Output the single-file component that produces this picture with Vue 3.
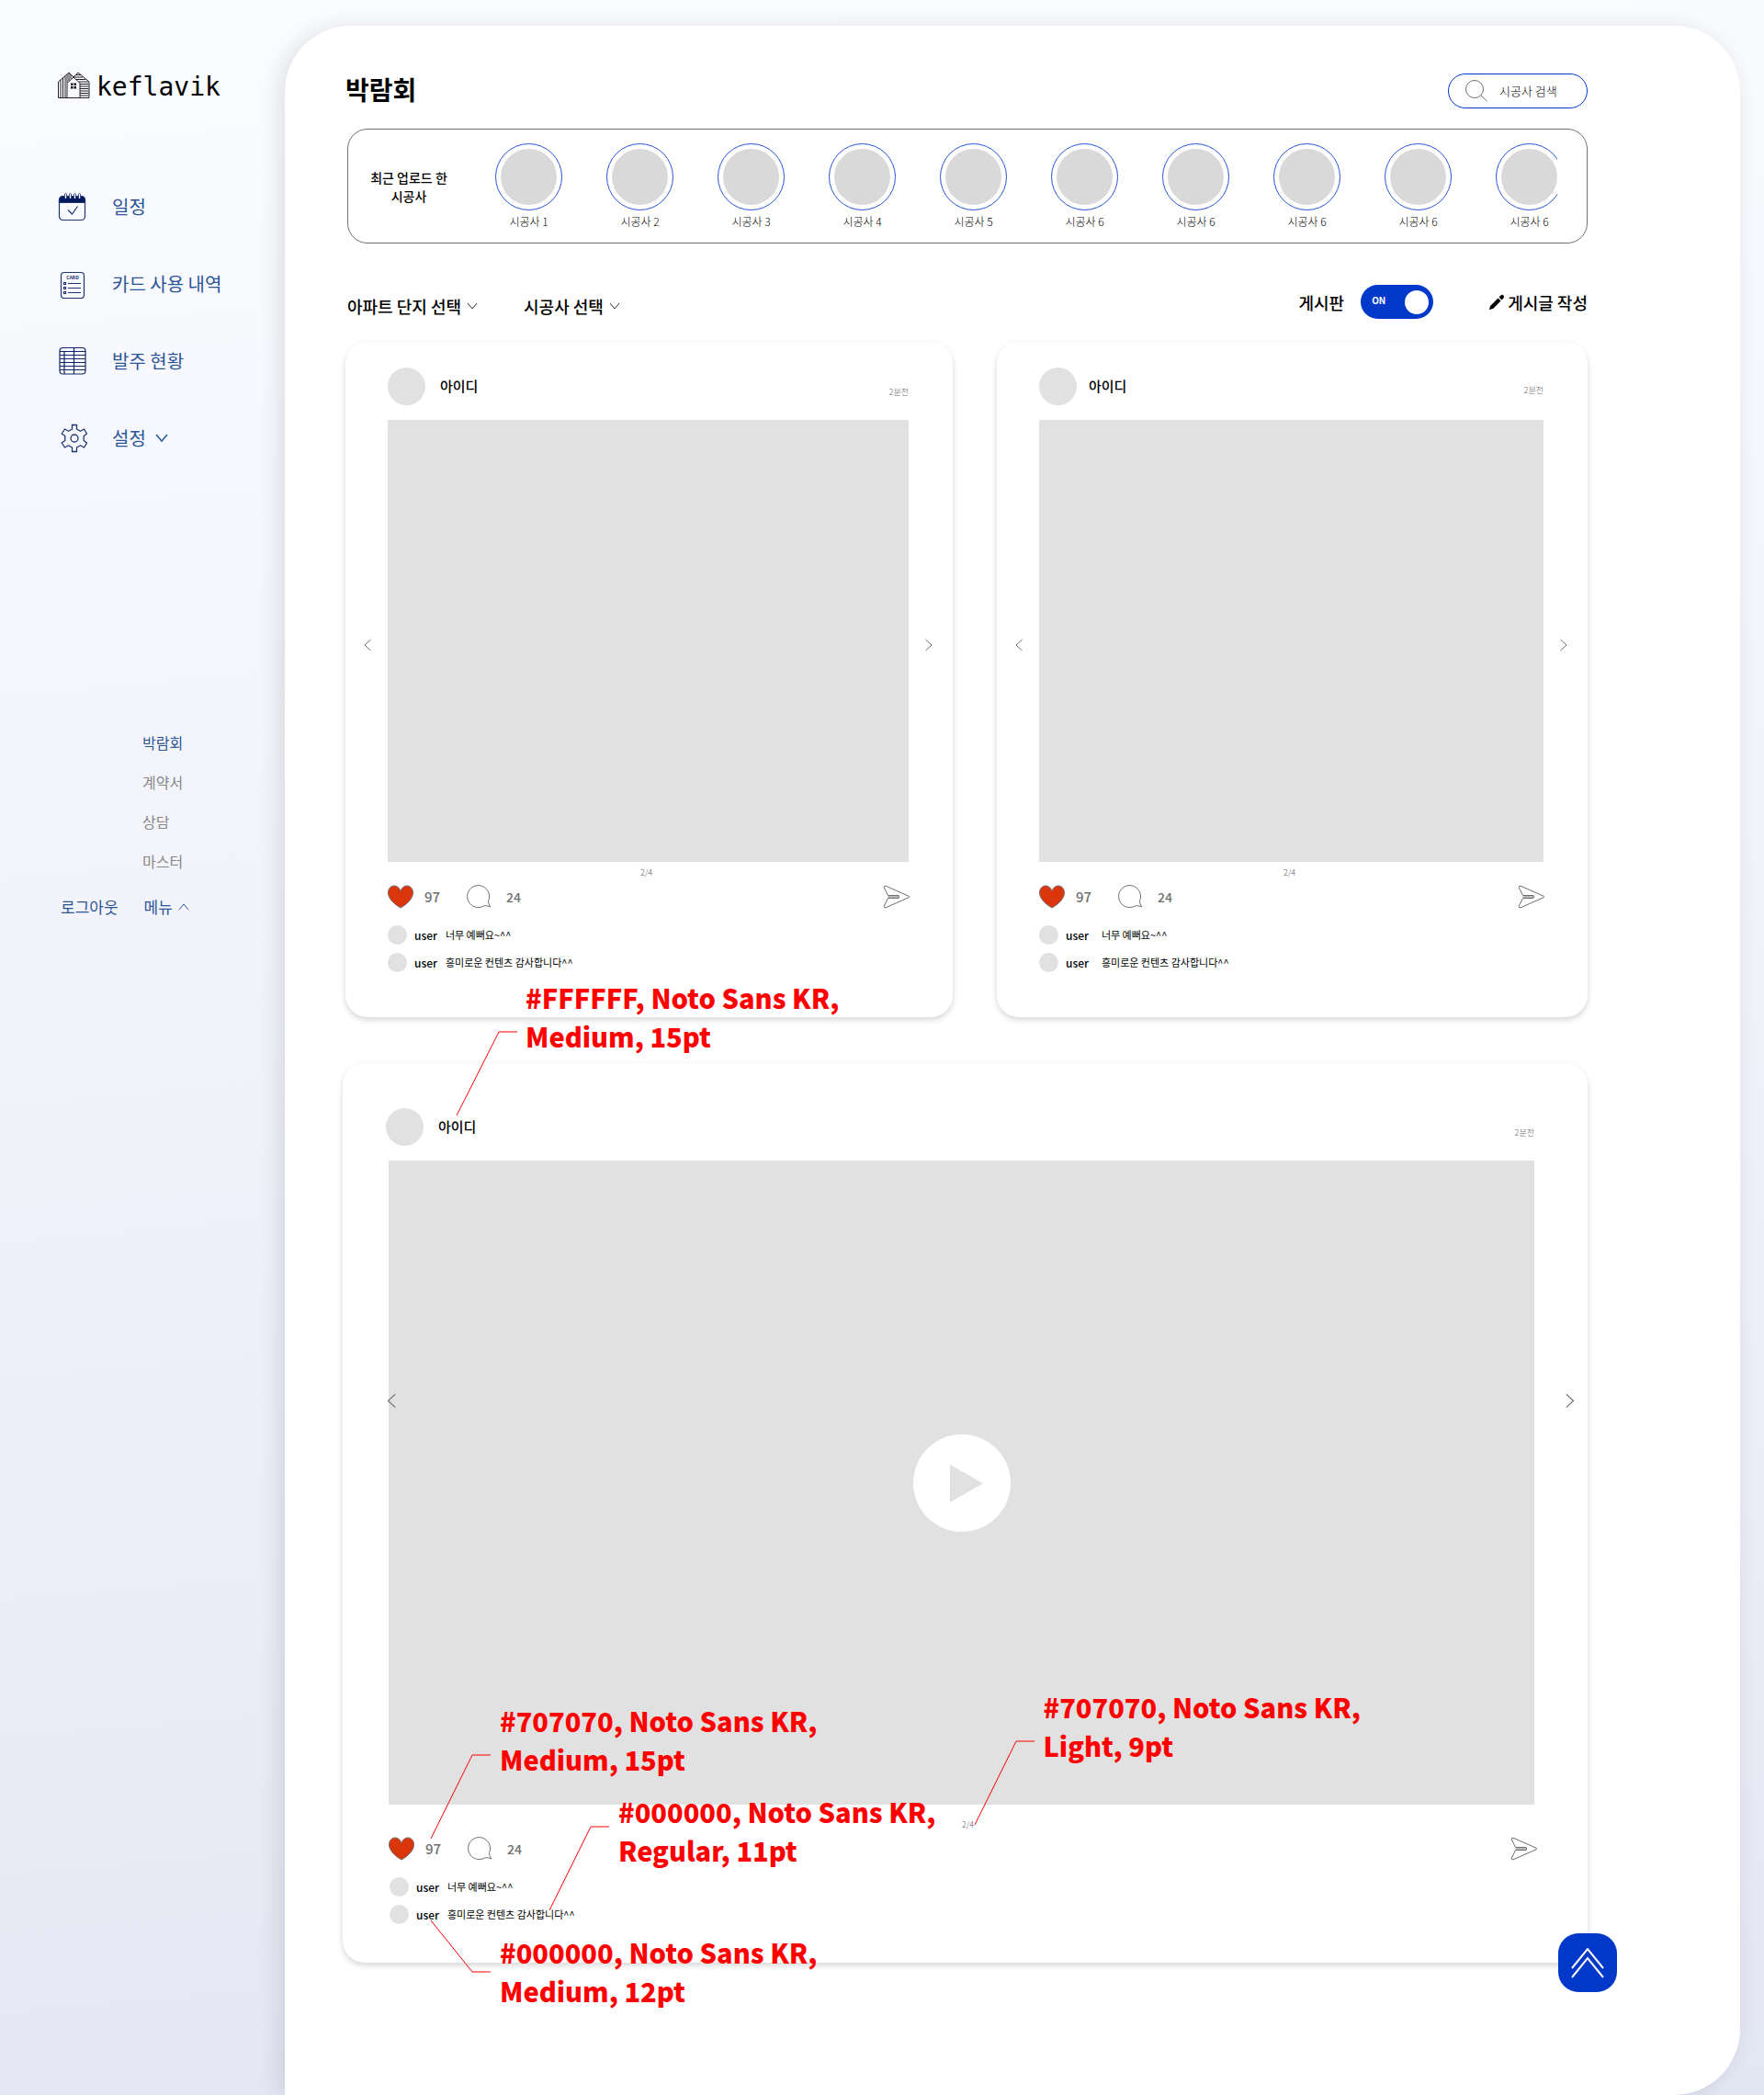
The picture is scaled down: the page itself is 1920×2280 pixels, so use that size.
<script setup>
import { ref } from 'vue'

const boardOn = ref(true)

const makers = [1, 2, 3, 4, 5, 6, 6, 6, 6, 6]

const subMenu = [
  { label: '박람회', active: true },
  { label: '계약서' },
  { label: '상담' },
  { label: '마스터' },
]

const posts = [
  { kind: 'left' },
  { kind: 'right' },
  { kind: 'wide', video: true },
]

const comments = ['너무 예뻐요~^^', '흥미로운 컨텐츠 감사합니다^^']
</script>

<template>
  <div class="page">
    <aside class="sidebar">
      <a class="logo" href="#">
        <svg width="36" height="30" viewBox="0 0 36 30" fill="none" stroke="#222" stroke-width="1">
          <path d="M1.500 28.500V11L13 1l5 5 5-5 12 10v17.500z" />
          <path d="M11 28V12.500L18 6l7 6.500V28" />
          <path d="M4 28V9M6.500 28V7M9 28V5M11 12V3M13 10V1.500M15 8V3" />
          <path d="M25 26h9.500M25 23.500h9.500M25 21h9.500M25 18.500h9.500M25 16h9.500M25 13.500h9.500M24 11h10M21 8.500h10M19 6h9M21 3.500h5" />
          <path d="M15 12.500h2.500v2.500H15zM18.500 12.500H21v2.500h-2.500zM15 16h2.500v2.500H15zM18.500 16H21v2.500h-2.500z" fill="#000" stroke="none" />
        </svg>
        <span>keflavik</span>
      </a>

      <nav class="nav">
        <a href="#">
          <svg width="32" height="32" viewBox="0 0 32 32" fill="none" stroke="#1d3575" stroke-width="1.200">
            <rect x="1.500" y="5" width="28" height="25.500" rx="4" />
            <path d="M1.500 11.500V8.500a4 4 0 0 1 4-4h20a4 4 0 0 1 4 4v3z" fill="#021a5c" />
            <path d="M8.500 7V2M13.500 7V2M18.500 7V2M23.500 7V2" stroke="#fafbff" stroke-width="2.500" />
            <path d="M7.500 7V2q1-1.500 2 0v5M12.500 7V2q1-1.500 2 0v5M17.500 7V2q1-1.500 2 0v5M22.500 7V2q1-1.500 2 0v5" stroke-width=".8" />
            <path d="M11 19.500l4.500 4.500 6-8.500" />
          </svg>
          <span>일정</span>
        </a>
        <a href="#">
          <svg width="32" height="32" viewBox="0 0 32 32" fill="none" stroke="#1d3575" stroke-width="1.200">
            <rect x="3.500" y="3.500" width="25" height="28" rx="3.500" />
            <text x="16" y="11" text-anchor="middle" class="card-word">CARD</text>
            <path d="M11 15.500h14M11 20.500h14M11 25.500h14" />
            <path d="M6.500 14.500h2v2h-2zM6.500 19.500h2v2h-2zM6.500 24.500h2v2h-2z" />
          </svg>
          <span>카드 사용 내역</span>
        </a>
        <a href="#">
          <svg width="32" height="32" viewBox="0 0 32 32" fill="none" stroke="#0f2669" stroke-width="1.200">
            <rect x="2" y="1.500" width="28" height="28.500" rx="3.500" />
            <path d="M2 5.500h28M2 9.500h28M2 13.500h28M2 17.500h28M2 21.500h28M2 25.500h28M7 5.500V30M17.500 1.500V30" />
          </svg>
          <span>발주 현황</span>
        </a>
        <a href="#">
          <svg width="32" height="32" viewBox="-1 0 32 32" fill="none" stroke="#1d3575" stroke-width="1.300" stroke-linejoin="round">
            <path d="M14.500 1.500h5v4.500l4 2.200 4-2.200 3 5-3.300 2.500v5l3.300 2.500-3 5-4-2.200-4 2.200v4.500h-5V26l-4-2.200-4 2.200-3.300-5 3.600-2.500v-5L3.200 11l3.300-5 4 2.200 4-2.200z" />
            <circle cx="17" cy="16" r="4" />
          </svg>
          <span>설정</span>
          <svg class="caret" width="14" height="10" viewBox="0 0 14 10" fill="none" stroke="#2b5597" stroke-width="1.500"><path d="M1 1l6 7 6-7" /></svg>
        </a>
      </nav>

      <nav class="submenu">
        <a v-for="m in subMenu" :key="m.label" href="#" :class="{ active: m.active }">{{ m.label }}</a>
      </nav>
      <div class="account">
        <a href="#">로그아웃</a>
        <a href="#">메뉴
          <svg width="12" height="8" viewBox="0 0 12 8" fill="none" stroke="#2b5597"><path d="M1 7l5-6 5 6" /></svg>
        </a>
      </div>
    </aside>

    <main class="panel">
      <header class="top">
        <h1>박람회</h1>
        <label class="search">
          <svg width="26" height="26" viewBox="0 0 26 26" fill="none" stroke="#707070"><circle cx="11" cy="11" r="9.500" /><path d="M18 18l6.500 6" /></svg>
          <input type="search" placeholder="시공사 검색" aria-label="시공사 검색">
        </label>
      </header>

      <section class="recent">
        <h2>최근 업로드 한<br>시공사</h2>
        <ul>
          <li v-for="(n, i) in makers" :key="i">
            <span class="ring"><i></i></span>
            <a href="#">시공사 {{ n }}</a>
          </li>
        </ul>
      </section>

      <section class="tools">
        <div class="filters">
          <button type="button">아파트 단지 선택
            <svg width="12" height="8" viewBox="0 0 12 8" fill="none" stroke="#333"><path d="M1 1l5 6 5-6" /></svg>
          </button>
          <button type="button">시공사 선택
            <svg width="12" height="8" viewBox="0 0 12 8" fill="none" stroke="#333"><path d="M1 1l5 6 5-6" /></svg>
          </button>
        </div>
        <div class="actions">
          <label class="switch">
            <span>게시판</span>
            <input v-model="boardOn" type="checkbox">
            <span class="track"><b>ON</b><i></i></span>
          </label>
          <button type="button">
            <svg width="18" height="18" viewBox="0 0 18 18"><path d="M1 17l1-4L10.500 4.500l3 3L5 16zM11.500 3.500l2-2q2-1.500 3 0t0 3l-2 2z" /></svg>
            게시글 작성
          </button>
        </div>
      </section>

      <section class="feed">
        <article v-for="p in posts" :key="p.kind" class="card" :class="p.kind">
          <header>
            <span class="avatar"></span>
            <strong>아이디</strong>
            <time>2분전</time>
          </header>
          <div class="media">
            <button v-if="p.video" class="play" type="button" aria-label="재생">
              <svg width="106" height="106" viewBox="0 0 106 106"><circle cx="53" cy="53" r="53" fill="#fff" /><path d="M40 33v41l36-20.500z" fill="#e1e1e1" /></svg>
            </button>
          </div>
          <button class="arrow prev" type="button" aria-label="이전">
            <svg width="10" height="16" viewBox="0 0 10 16" fill="none" stroke="#707070"><path d="M8.500 2L2 8l6.500 6" /></svg>
          </button>
          <button class="arrow next" type="button" aria-label="다음">
            <svg width="10" height="16" viewBox="0 0 10 16" fill="none" stroke="#707070"><path d="M1.500 2L8 8l-6.500 6" /></svg>
          </button>
          <p class="pager">2/4</p>
          <div class="stats">
            <button type="button" class="like">
              <svg width="28" height="26" viewBox="0 0 28 26"><path d="M14 25C7 21 .5 15 .5 8.500.5 4 3.500 1 7 1c3.500 0 6 2.500 7 6 1-3.500 3.500-6 7-6 3.500 0 6.500 3 6.500 7.500C27.500 15 21 21 14 25z" fill="#da350b" stroke="#707070" /></svg>
              97
            </button>
            <button type="button" class="reply">
              <svg width="28" height="26" viewBox="0 0 28 26" fill="none" stroke="#707070"><path d="M24.500 17.500a12 12 0 1 0-5 5.500c2-.8 4.500 0 7.500.8-1.800-2-2.500-4-2.500-6.300z" /></svg>
              24
            </button>
            <button type="button" class="send" aria-label="공유">
              <svg width="30" height="26" viewBox="0 0 30 26" fill="none" stroke="#707070" stroke-linejoin="round"><path d="M3 1.200l25 11q1.500.8 0 1.600l-25 11q-2 .5-1.800-1.500L5.500 14.500H17q1.500-1.500 0-3H5.500L1.200 2.700Q1 .7 3 1.200zM5.500 13H17" /></svg>
            </button>
          </div>
          <ul class="comments">
            <li v-for="c in comments" :key="c"><i></i><b>user</b><span>{{ c }}</span></li>
          </ul>

          <template v-if="p.video">
            <div class="note n-id">
              <svg width="68" height="93" viewBox="0 0 68 93"><path d="M1 92L47 1h20" /></svg>
              <p>#FFFFFF, Noto Sans KR,<br>Medium, 15pt</p>
            </div>
            <div class="note n-like">
              <svg width="68" height="93" viewBox="0 0 68 93"><path d="M1 92L46 1h20" /></svg>
              <p>#707070, Noto Sans KR,<br>Medium, 15pt</p>
            </div>
            <div class="note n-text">
              <svg width="68" height="93" viewBox="0 0 68 93"><path d="M1 92L46 1h20" /></svg>
              <p>#000000, Noto Sans KR,<br>Regular, 11pt</p>
            </div>
            <div class="note n-user">
              <svg width="68" height="59" viewBox="0 0 68 59"><path d="M1 1l45 56h20" /></svg>
              <p>#000000, Noto Sans KR,<br>Medium, 12pt</p>
            </div>
            <div class="note n-page">
              <svg width="68" height="93" viewBox="0 0 68 93"><path d="M1 92L46 1h20" /></svg>
              <p>#707070, Noto Sans KR,<br>Light, 9pt</p>
            </div>
          </template>
        </article>
        <button class="to-top" type="button" aria-label="맨 위로">
          <svg width="38" height="36" viewBox="0 0 38 36" fill="none" stroke="#fff" stroke-width="2"><path d="M2 24L19 3l17 21M2 34l17-21 17 21" /></svg>
        </button>
      </section>
    </main>
  </div>
</template>

<style>
body {
  margin: 0;
}
</style>

<style scoped>
* {
  box-sizing: border-box;
}
.page {
  display: flex;
  min-height: 100vh;
  padding: 28px 26px 0 0;
  background: linear-gradient(175deg, #fbfcff 0%, #f3f4fb 40%, #e3e6f3 100%);
  font-family: "Noto Sans CJK KR", "Noto Sans KR", sans-serif;
  color: #000;
  overflow: hidden;
}
a {
  color: inherit;
  text-decoration: none;
}
button {
  padding: 0;
  border: 0;
  background: none;
  font: inherit;
  color: inherit;
}
svg {
  display: block;
  flex: none;
}
h1, h2, p, ul {
  margin: 0;
  padding: 0;
  list-style: none;
}

/* sidebar */
.sidebar {
  flex: none;
  width: 310px;
  padding: 48px 0 0 62px;
  color: #2b5597;
}
.logo {
  display: flex;
  align-items: flex-start;
  gap: 7px;
  height: 36px;
  color: #000;
  font: 28px/38px "DejaVu Sans Mono", monospace;
}
.logo svg {
  margin-top: 2px;
}
.nav {
  display: flex;
  flex-direction: column;
  gap: 52px;
  margin: 97px 0 0 1px;
}
.nav a {
  display: flex;
  align-items: center;
  height: 32px;
  font-size: 20px;
  line-height: 32px;
}
.nav span {
  margin-left: 27px;
}
.nav .caret {
  margin-left: 10px;
}
.card-word {
  font: 700 5px "Noto Sans", sans-serif;
  fill: #1d3575;
  stroke: none;
}
.submenu {
  display: flex;
  flex-direction: column;
  gap: 19px;
  margin: 303px 0 0 93px;
  color: #888;
  font-size: 16px;
  line-height: 24px;
}
.submenu .active {
  color: #2b5597;
}
.account {
  display: flex;
  gap: 28px;
  margin: 26px 0 0 4px;
  font-size: 17px;
  line-height: 24px;
}
.account a {
  display: flex;
  align-items: center;
  gap: 6px;
}

/* panel */
.panel {
  flex: 1;
  min-width: 0;
  padding: 52px 166px 144px 66px;
  border-radius: 72px 72px 72px 0;
  background: #fff;
  box-shadow: -6px 2px 24px rgba(0, 0, 0, 0.11);
}
.top {
  display: flex;
  align-items: flex-start;
  justify-content: space-between;
  height: 38px;
}
h1 {
  font-size: 28px;
  line-height: 34px;
  font-weight: 700;
}
.search {
  display: flex;
  align-items: center;
  gap: 12px;
  width: 152px;
  height: 38px;
  padding-left: 17px;
  border: 1px solid #0038c9;
  border-radius: 19px;
}
.search input {
  width: 90px;
  padding: 0;
  border: 0;
  outline: 0;
  background: none;
  font: 300 13px/20px "Noto Sans CJK KR", sans-serif;
}
.search input::placeholder {
  color: #000;
}
.recent {
  display: flex;
  height: 125px;
  margin: 22px 0 0 2px;
  padding: 15px 32px 0 0;
  border: 1px solid #707070;
  border-radius: 22px;
}
.recent h2 {
  flex: none;
  width: 160px;
  padding: 27px 28px 0 0;
  font-size: 14px;
  line-height: 20px;
  font-weight: 500;
  text-align: center;
}
.recent ul {
  display: flex;
  flex: 1;
  gap: 48px;
  overflow: hidden;
}
.recent li {
  flex: none;
  width: 73px;
  text-align: center;
  font-size: 12px;
  line-height: 18px;
  font-weight: 300;
}
.ring {
  display: block;
  width: 73px;
  height: 73px;
  margin-bottom: 3px;
  padding: 5px;
  border: 1px solid #2455d8;
  border-radius: 50%;
}
.ring i {
  display: block;
  height: 61px;
  border-radius: 50%;
  background: #d9d9d9;
}
.tools {
  display: flex;
  justify-content: space-between;
  align-items: flex-start;
  height: 62px;
  margin: 45px 0 0 2px;
  font-size: 18px;
  line-height: 26px;
  font-weight: 500;
}
.filters {
  display: flex;
  gap: 50px;
  padding-top: 10px;
}
.tools button {
  display: flex;
  align-items: center;
  gap: 6px;
}
.actions {
  display: flex;
  align-items: center;
  gap: 60px;
}
.actions button {
  gap: 3px;
}
.switch {
  display: flex;
  align-items: center;
  gap: 18px;
}
.switch input {
  position: absolute;
  opacity: 0;
}
.track {
  display: flex;
  align-items: center;
  justify-content: space-between;
  width: 79px;
  height: 37px;
  padding: 0 5px 0 12px;
  border-radius: 19px;
  background: #0038c9;
  color: #fff;
}
.track b {
  padding-bottom: 3px;
  font-size: 10px;
  line-height: 16px;
  font-weight: 700;
}
.track i {
  width: 26px;
  height: 26px;
  border-radius: 50%;
  background: #fff;
}

/* feed */
.feed {
  position: relative;
  display: grid;
  grid-template-columns: 661fr 643fr;
  column-gap: 48px;
  row-gap: 50px;
}
.card {
  position: relative;
  height: 735px;
  padding: 28px 48px 0 46px;
  border-radius: 24px;
  background: #fff;
  box-shadow: 0 3px 6px rgba(0, 0, 0, 0.16);
}
.card.wide {
  grid-column: 1 / 3;
  height: 979px;
  margin-left: -3px;
  padding: 49px 58px 0 50px;
}
.card > header {
  display: flex;
  align-items: center;
  height: 41px;
  margin-bottom: 16px;
}
.wide > header {
  margin-left: -3px;
}
.avatar {
  width: 41px;
  height: 41px;
  margin-right: 16px;
  border-radius: 50%;
  background: #e1e1e1;
}
.right .avatar {
  margin-right: 13px;
}
.card strong {
  padding-bottom: 2px;
  font-size: 15px;
  line-height: 22px;
  font-weight: 500;
}
.card time {
  margin: 12px 0 0 auto;
  color: #707070;
  font-size: 9px;
  line-height: 14px;
  font-weight: 300;
}
.right time {
  margin-top: 8px;
}
.media {
  display: flex;
  align-items: center;
  justify-content: center;
  height: 481px;
  background: #e1e1e1;
}
.wide .media {
  height: 701px;
}
.arrow {
  position: absolute;
  top: 322px;
}
.prev {
  left: 19px;
}
.next {
  right: 21px;
}
.wide .arrow {
  top: 358px;
}
.wide .arrow svg {
  width: 12px;
  height: 19px;
}
.wide .prev {
  left: 47px;
}
.wide .next {
  right: 13px;
}
.pager {
  padding: 5px 4px 0 0;
  color: #606060;
  font-size: 9px;
  line-height: 14px;
  font-weight: 300;
  text-align: center;
}
.wide .pager {
  padding: 15px 0 0 14px;
}
.stats {
  display: flex;
  align-items: center;
  gap: 28px;
  height: 26px;
  margin-top: 6px;
  color: #707070;
  font-weight: 500;
}
.stats button {
  display: flex;
  align-items: center;
  gap: 12px;
  font-size: 15px;
  line-height: 22px;
}
.stats .reply {
  gap: 16px;
  font-size: 14px;
}
.stats .send {
  margin: 0 -2px 0 auto;
}
.wide .send {
  margin-right: -4px;
}
.comments {
  display: flex;
  flex-direction: column;
  gap: 9px;
  margin-top: 18px;
  font-size: 11px;
  line-height: 21px;
}
.wide .comments {
  margin-left: 1px;
}
.comments li {
  display: flex;
  align-items: center;
}
.comments i {
  width: 21px;
  height: 21px;
  margin-right: 8px;
  border-radius: 50%;
  background: #e1e1e1;
}
.comments b {
  margin-right: 9px;
  font-size: 12px;
  font-weight: 500;
}
.right .comments b {
  margin-right: 14px;
}

/* spec notes laid over the cards */
.note {
  position: absolute;
  display: flex;
  align-items: flex-start;
  gap: 8px;
  color: #f00;
  font-size: 29px;
  line-height: 42px;
  font-weight: 900;
  white-space: nowrap;
}
.note svg {
  margin-top: 58px;
  fill: none;
  stroke: #f00;
}
.n-id {
  top: -93px;
  left: 123px;
}
.n-like {
  top: 694px;
  left: 95px;
}
.n-text {
  top: 793px;
  left: 224px;
}
.n-text svg {
  margin-top: 37px;
}
.n-user {
  top: 946px;
  left: 95px;
}
.n-user svg {
  margin-top: -14px;
}
.n-page {
  top: 679px;
  left: calc(50% + 9px);
}
.to-top {
  position: absolute;
  right: -32px;
  bottom: -32px;
  display: flex;
  align-items: center;
  justify-content: center;
  width: 64px;
  height: 64px;
  border-radius: 22px;
  background: #0038c9;
}
</style>
